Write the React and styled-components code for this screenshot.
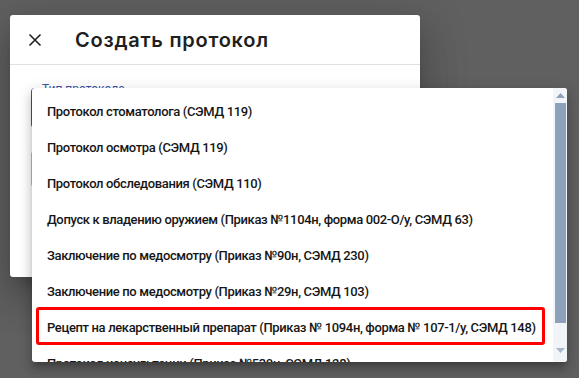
import React from "react";
import styled, { createGlobalStyle } from "styled-components";

const Global = createGlobalStyle`
  html, body { margin: 0; padding: 0; }
  body {
    background: #606060;
    font-family: Roboto, "Noto Sans", Arial, sans-serif;
    width: 579px;
    height: 378px;
    overflow: hidden;
  }
`;

const Page = styled.div`
  position: relative;
  width: 579px;
  height: 378px;
  padding: 15px 0 0 10px;
  box-sizing: border-box;
`;

const Dialog = styled.div`
  width: 410px;
  height: 262px;
  background: #fff;
  border-radius: 3px;
  box-shadow: 0 11px 15px -7px rgba(0,0,0,.2), 0 24px 38px 3px rgba(0,0,0,.14), 0 9px 46px 8px rgba(0,0,0,.12);
  display: flex;
  flex-direction: column;
`;

const Header = styled.div`
  height: 50px;
  border-bottom: 1px solid #e0e0e0;
  display: flex;
  align-items: center;
  padding-left: 13px;
  gap: 28px;
  box-sizing: border-box;
`;

const CloseBtn = styled.button`
  width: 24px;
  height: 24px;
  padding: 0;
  border: 0;
  background: none;
  display: flex;
  align-items: center;
  justify-content: center;
  color: #212121;
`;

const Title = styled.h2`
  margin: 0;
  font-family: Inter, Roboto, sans-serif;
  font-size: 20px;
  font-weight: 600;
  letter-spacing: 0.75px;
  color: #1f1f1f;
`;

const Content = styled.div`
  padding: 23px 21px 0;
  display: flex;
  flex-direction: column;
  gap: 22px;
`;

const Field = styled.div`
  position: relative;
  height: 36px;
  border: ${(p) => (p.$focused ? "2px solid #3455a8" : "1px solid #bdbdbd")};
  border-radius: 4px;
`;

const FieldLabel = styled.span`
  position: absolute;
  left: 7px;
  top: -8px;
  padding: 0 2px;
  background: #fff;
  font-size: 12px;
  color: #3455a8;
`;

const Menu = styled.div`
  position: absolute;
  left: 32px;
  top: 88px;
  width: 535px;
  height: 274px;
  background: #fff;
  border-radius: 3px;
  box-shadow: 0 5px 5px -3px rgba(0,0,0,.2), 0 8px 10px 1px rgba(0,0,0,.14), 0 3px 14px 2px rgba(0,0,0,.12);
  display: flex;
  overflow: hidden;
`;

const List = styled.ul`
  flex: 1;
  margin: 0;
  padding: 6px 0 0;
  list-style: none;
  overflow: hidden;
`;

const Item = styled.li`
  position: relative;
  height: 36px;
  line-height: 36px;
  padding-left: 15px;
  font-size: 13px;
  letter-spacing: -0.36px;
  font-weight: 500;
  color: #161616;
  white-space: nowrap;
`;

const Highlight = styled.span`
  position: absolute;
  left: 4px;
  right: 8px;
  top: -3px;
  bottom: 1px;
  border: 3px solid #ff0000;
  border-radius: 3px;
  pointer-events: none;
`;

const Scrollbar = styled.div`
  width: 14px;
  background: #f1f4f9;
  display: flex;
  flex-direction: column;
  align-items: center;
`;

const Arrow = styled.div`
  height: 15px;
  width: 14px;
  display: flex;
  align-items: center;
  justify-content: center;
`;

const Thumb = styled.div`
  width: 11px;
  height: 220px;
  background: #8da1bb;
`;

const Spacer = styled.div`
  flex: 1;
`;

const BottomGap = styled.div`
  height: 4px;
`;

const items = [
  "Протокол стоматолога (СЭМД 119)",
  "Протокол осмотра (СЭМД 119)",
  "Протокол обследования (СЭМД 110)",
  "Допуск к владению оружием (Приказ №1104н, форма 002-О/у, СЭМД 63)",
  "Заключение по медосмотру (Приказ №90н, СЭМД 230)",
  "Заключение по медосмотру (Приказ №29н, СЭМД 103)",
  "Рецепт на лекарственный препарат (Приказ № 1094н, форма № 107-1/у, СЭМД 148)",
  "Протокол консультации (Приказ №530н, СЭМД 128)",
];

export default function App() {
  return (
    <>
      <Global />
      <Page>
        <Dialog>
          <Header>
            <CloseBtn aria-label="Закрыть">
              <svg width="14" height="14" viewBox="0 0 14 14">
                <path d="M1.5 1.5 L12.5 12.5 M12.5 1.5 L1.5 12.5" stroke="#222" strokeWidth="1.6" fill="none" />
              </svg>
            </CloseBtn>
            <Title>Создать протокол</Title>
          </Header>
          <Content>
            <Field $focused>
              <FieldLabel>Тип протокола</FieldLabel>
            </Field>
            <Field />
          </Content>
        </Dialog>
        <Menu>
          <List>
            {items.map((t, i) => (
              <Item key={i}>
                {t}
                {i === 6 && <Highlight />}
              </Item>
            ))}
          </List>
          <Scrollbar>
            <Arrow>
              <svg width="9" height="5" viewBox="0 0 9 5"><path d="M0 5 L4.5 0 L9 5 Z" fill="#8da1bb" /></svg>
            </Arrow>
            <Thumb />
            <Spacer />
            <Arrow>
              <svg width="9" height="5" viewBox="0 0 9 5"><path d="M0 0 L4.5 5 L9 0 Z" fill="#a9b7ca" /></svg>
            </Arrow>
            <BottomGap />
          </Scrollbar>
        </Menu>
      </Page>
    </>
  );
}
